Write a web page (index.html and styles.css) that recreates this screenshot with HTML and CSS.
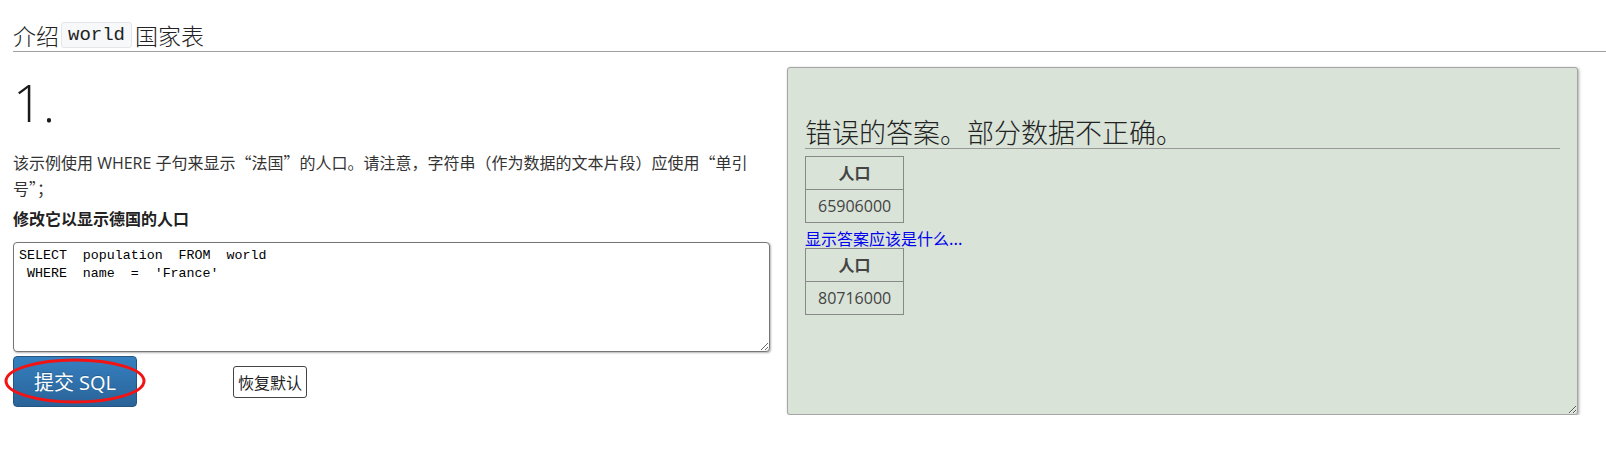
FILE: index.html
```html
<!DOCTYPE html>
<html lang="zh-CN">
<head>
<meta charset="utf-8">
<title>介绍 world 国家表</title>
<link rel="stylesheet" href="styles.css">
</head>
<body>
<div class="page">
  <h1 class="title">介绍<code class="tbl">world</code>国家表</h1>
  <div class="main">
    <div class="left">
      <div class="num">1.</div>
      <p class="desc">该示例使用 WHERE 子句来显示<span class="cj">“法国”的人口。请注意，字符串（作为数据的文本片段）应使用“单引号”；</span></p>
      <p class="task">修改它以显示德国的人口</p>
      <textarea class="sql" spellcheck="false">SELECT  population  FROM  world
 WHERE  name  =  'France'</textarea>
      <div class="actions">
        <div class="submit-wrap">
          <button class="submit">提交 SQL</button>
          <svg class="ring" width="142" height="46" viewBox="0 0 142 46"><ellipse cx="71" cy="23" rx="69" ry="21" fill="none" stroke="#f21414" stroke-width="3"/></svg>
        </div>
        <button class="reset">恢复默认</button>
      </div>
    </div>
    <div class="result">
      <h2 class="verdict">错误的答案。部分数据不正确。</h2>
      <table class="res">
        <tr><th>人口</th></tr>
        <tr><td>65906000</td></tr>
      </table>
      <a class="show" href="#">显示答案应该是什么...</a>
      <table class="res">
        <tr><th>人口</th></tr>
        <tr><td>80716000</td></tr>
      </table>
    </div>
  </div>
</div>
</body>
</html>
```
FILE: styles.css
```css
html, body {
  margin: 0;
  padding: 0;
  background: #fff;
}
body {
  font-family: "Open Sans", "Noto Sans CJK SC", sans-serif;
  color: #333;
}
.page {
  padding: 19px 0 0 13px;
}
.title {
  margin: 0;
  height: 32px;
  font-family: "Noto Sans CJK SC", serif;
  font-weight: 300;
  font-size: 23px;
  line-height: 32px;
  color: #222;
  border-bottom: 1px solid #a0a0a0;
}
.tbl {
  font-family: "Liberation Mono", monospace;
  font-size: 19px;
  line-height: 24px;
  display: inline-block;
  vertical-align: top;
  margin: 3px 3px 0 2px;
  background: #f6f8fa;
  border: 1px solid #e4e7ea;
  border-radius: 3px;
  padding: 0 6px;
}
.main {
  display: flex;
  gap: 17px;
  margin-top: 15px;
  align-items: flex-start;
}
.left {
  width: 757px;
}
.num {
  margin-top: 6px;
  font-family: "Open Sans", sans-serif;
  font-weight: 300;
  font-size: 52px;
  line-height: 58px;
  color: #1a1a1a;
}
.desc {
  margin: 19px 0 5px;
  font-size: 16px;
  line-height: 25px;
  max-width: 735px;
  color: #333;
}
.cj {
  font-family: "Noto Sans CJK SC", sans-serif;
}
.task {
  margin: 0;
  font-size: 16px;
  line-height: 25px;
  font-weight: 700;
  color: #222;
}
.sql {
  display: block;
  box-sizing: border-box;
  width: 757px;
  height: 110px;
  margin-top: 10px;
  padding: 4px 5px;
  border: 1px solid #767676;
  border-radius: 4px;
  box-shadow: 1px 1px 2px rgba(0,0,0,0.3);
  font-family: "Liberation Mono", monospace;
  font-size: 13.3px;
  line-height: 18px;
  color: #000;
  background: #fff;
}
.actions {
  display: flex;
  align-items: center;
  margin-top: 4px;
}
.submit-wrap {
  position: relative;
}
.submit {
  display: block;
  width: 124px;
  height: 51px;
  border: 1px solid #245580;
  border-radius: 4px;
  background: linear-gradient(to bottom, #3580c0 0%, #2a6399 100%);
  color: #fff;
  font-family: "Open Sans", "Noto Sans CJK SC", sans-serif;
  font-size: 20px;
  padding: 0;
  text-shadow: 0 -1px 0 rgba(0,0,0,0.2);
}
.ring {
  position: absolute;
  left: -9px;
  top: 2px;
}
.reset {
  margin-left: 96px;
  height: 32px;
  padding: 0 4px;
  border: 1px solid #444;
  border-radius: 3px;
  background: #fff;
  color: #222;
  font-family: "Noto Sans CJK SC", sans-serif;
  font-size: 16px;
  line-height: 30px;
}
.result {
  box-sizing: border-box;
  width: 791px;
  height: 348px;
  padding: 18px 17px;
  background: #d9e3d8;
  border: 1px solid #a5a5a5;
  border-radius: 3px;
  box-shadow: 1px 1px 3px rgba(0,0,0,0.35);
  resize: both;
  overflow: auto;
}
.verdict {
  margin: 30px 0 7px;
  font-family: "Noto Sans CJK SC", serif;
  font-weight: 300;
  font-size: 27px;
  line-height: 32px;
  color: #222;
  border-bottom: 1px solid #999;
}
.res {
  border-collapse: collapse;
}
.res th, .res td {
  border: 1px solid #888;
  padding: 5px 12px;
  font-size: 16px;
  line-height: 22px;
  color: #444;
  text-align: center;
}
.res th {
  font-weight: 700;
}
.show {
  display: block;
  padding-top: 5px;
  font-size: 16px;
  line-height: 20px;
  color: #0000ee;
  text-decoration: none;
  font-family: "Noto Sans CJK SC", sans-serif;
}
```
